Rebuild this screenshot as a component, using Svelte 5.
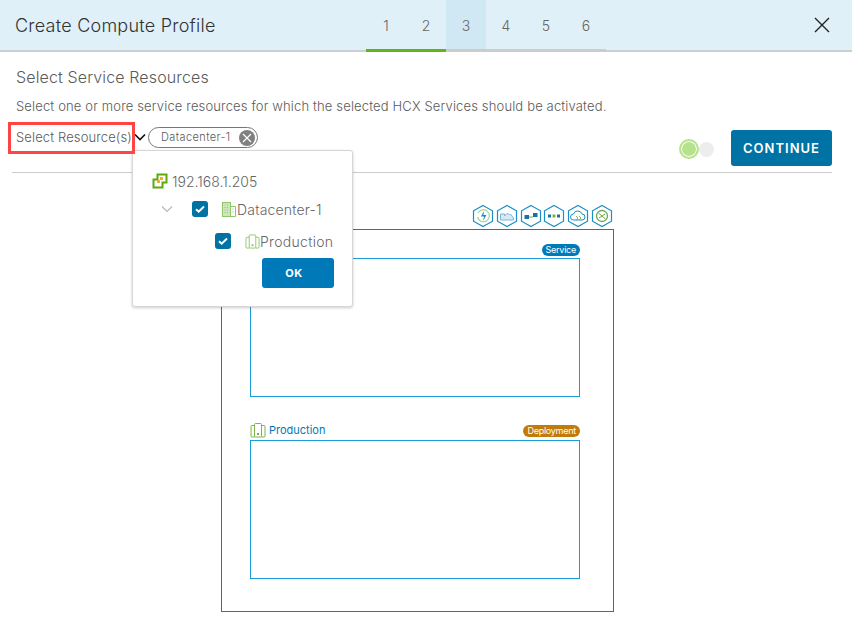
<script>
  const steps = [
    { n: 1, cls: 'done' },
    { n: 2, cls: 'done' },
    { n: 3, cls: 'active' },
    { n: 4, cls: '' },
    { n: 5, cls: '' },
    { n: 6, cls: '' }
  ];
</script>

<div class="page">
  <header class="head">
    <h1>Create Compute Profile</h1>
    <nav class="steps">
      {#each steps as s}
        <span class="step {s.cls}">{s.n}</span>
      {/each}
    </nav>
    <svg class="close" width="16" height="16" viewBox="0 0 16 16"><path d="M1 1l14 14M15 1L1 15" stroke="#222" stroke-width="1.4" fill="none"/></svg>
  </header>

  <main class="body">
    <h2>Select Service Resources</h2>
    <p class="desc">Select one or more service resources for which the selected HCX Services should be activated.</p>

    <div class="toolbar">
      <span class="sel">Select Resource(s)</span>
      <svg class="chev" width="12" height="8" viewBox="0 0 12 8"><path d="M1 1.500l5 5 5-5" stroke="#111" stroke-width="1.6" fill="none"/></svg>
      <span class="chip">Datacenter-1
        <span class="x"><svg width="16" height="16" viewBox="0 0 16 16"><path d="M4 4l8 8M12 4l-8 8" stroke="#fff" stroke-width="1.2"/></svg></span>
      </span>
      <span class="toggle"><i class="on"></i><i class="off"></i></span>
      <button class="cont">CONTINUE</button>
    </div>
    <div class="rule"></div>

    <div class="diagram">
      <div class="hexes">
        {#each [0,1,2,3,4,5] as h}
          <svg width="22" height="24" viewBox="0 0 22 24">
            <path d="M11 1.500l9.500 5.300v10.400L11 22.500 1.500 17.200V6.800z" fill="#fff" stroke="#1b8fc4" stroke-width="1.2"/>
            {#if h === 0}
              <path d="M6 9a6 6 0 1 1-.5 4" fill="none" stroke="#a5d59a" stroke-width="1.2"/>
              <path d="M12 7l-3 5.500h3l-1 4.500 3.500-6h-3z" fill="#1b8fc4"/>
            {:else if h === 1}
              <path d="M4.500 16v-6h4v2l3-3 2 2 1-1 3 4v2z" fill="#d6eaf5" stroke="#7fb6d6" stroke-width="1"/>
            {:else if h === 2}
              <rect x="4.500" y="11" width="4.500" height="4" fill="#1b6fa8"/>
              <rect x="13" y="9" width="4.500" height="4" fill="#1b6fa8"/>
              <path d="M9 13h4" stroke="#8cc152" stroke-width="1.2"/>
            {:else if h === 3}
              <rect x="5" y="10.500" width="3" height="3" fill="#1b6fa8"/>
              <rect x="9.500" y="10.500" width="3" height="3" fill="#7bb342"/>
              <rect x="14" y="10.500" width="3" height="3" fill="#1b6fa8"/>
            {:else if h === 4}
              <path d="M6.500 16a3 3 0 0 1 0-6 4.500 4.500 0 0 1 8.500 0 3 3 0 0 1 0 6z" fill="none" stroke="#1b8fc4" stroke-width="1"/>
              <path d="M9 12l2 2-2 2M12 12l2 2-2 2" fill="none" stroke="#7bb342" stroke-width="1"/>
            {:else}
              <circle cx="11" cy="12" r="5.500" fill="none" stroke="#6aa84f" stroke-width="1.300"/>
              <path d="M7.500 9l7 6M8 14c2-1 4-3 6-4" fill="none" stroke="#6aa84f" stroke-width="1"/>
            {/if}
          </svg>
        {/each}
      </div>
      <div class="frame">
        <div class="group">
          <div class="group-head"><span class="pill blue">Service</span></div>
          <div class="box first"></div>
        </div>
        <div class="group second">
          <div class="group-head">
            <span class="name">
              <svg width="16" height="16" viewBox="0 0 16 16" fill="none" stroke="#7fb24a" stroke-width="1"><rect x="4.500" y="1.500" width="7" height="13.500" rx="1"/><path d="M4.500 3.500H2a1 1 0 0 0-1 1V14a1 1 0 0 0 1 1h2.500M11.500 3.500H14a1 1 0 0 1 1 1V14a1 1 0 0 1-1 1h-2.500"/><rect x="7.500" y="11.500" width="1" height="1" fill="#7fb24a"/></svg>
              Production
            </span>
            <span class="pill amber">Deployment</span>
          </div>
          <div class="box"></div>
        </div>
      </div>
    </div>
  </main>

  <div class="pop">
    <div class="row r0">
      <svg width="16" height="16" viewBox="0 0 16 16">
        <path d="M5.500 1.500h9v8h-4v5h-9v-8h4z" fill="none" stroke="#5daa0e" stroke-width="2"/>
        <rect x="8" y="4" width="3" height="3" fill="#f2b01e"/>
        <rect x="5" y="7" width="3" height="3" fill="#f2b01e"/>
      </svg>
      <span>192.168.1.205</span>
    </div>
    <div class="row r1">
      <svg class="caret" width="12" height="8" viewBox="0 0 12 8"><path d="M1 1.500l5 5 5-5" stroke="#b8b8b8" stroke-width="1.200" fill="none"/></svg>
      <span class="cb"><svg width="16" height="16" viewBox="0 0 16 16"><path d="M4 8.200l2.700 2.500L12 5.500" stroke="#fff" stroke-width="2" fill="none"/></svg></span>
      <svg class="ic1" width="14" height="15" viewBox="0 0 14 15" fill="none" stroke="#8fc66b" stroke-width="1"><rect x="0.500" y="0.500" width="8" height="14" fill="#cfe6bd"/><path d="M8.500 4.500h5v10h-5M2.500 3h1M5 3h1M2.500 5.500h1M5 5.500h1M2.500 8h1M5 8h1M2.500 10.500h1M5 10.500h1M10.500 7h1M10.500 10h1"/></svg>
      <span>Datacenter-1</span>
    </div>
    <div class="row r2">
      <span class="cb"><svg width="16" height="16" viewBox="0 0 16 16"><path d="M4 8.200l2.700 2.500L12 5.500" stroke="#fff" stroke-width="2" fill="none"/></svg></span>
      <svg class="ic2" width="15" height="15" viewBox="0 0 16 16" fill="none" stroke="#8fc66b" stroke-width="1"><rect x="4.500" y="1" width="7" height="14" rx="1"/><path d="M4.500 3.500H2a1 1 0 0 0-1 1V14a1 1 0 0 0 1 1h2.500M11.500 3.500H14a1 1 0 0 1 1 1V14a1 1 0 0 1-1 1h-2.500"/><rect x="7.500" y="11.500" width="1" height="1" fill="#8fc66b"/></svg>
      <span>Production</span>
    </div>
    <div class="row r3"><button class="ok">OK</button></div>
  </div>

  <div class="mark"></div>
</div>

<style>
  :global(body) { margin: 0; background: #fff; }
  .page {
    position: relative;
    width: 852px;
    height: 643px;
    overflow: hidden;
    font-family: Inter, "Noto Sans", sans-serif;
    font-weight: 300;
    color: #5a5a5a;
  }
  .head {
    height: 50px;
    display: flex;
    align-items: center;
    background: #dff0f9;
    border-bottom: 2px solid #c9cfd2;
    box-sizing: content-box;
  }
  h1 {
    margin: 0 0 0 15px;
    width: 351px;
    font-size: 18px;
    font-weight: 300;
    letter-spacing: .24px;
    color: #333;
  }
  .steps { display: flex; height: 50px; }
  .step {
    width: 40px;
    height: 52px;
    margin-bottom: -2px;
    box-sizing: border-box;
    border-bottom: 3px solid #ccc;
    text-align: center;
    line-height: 51px;
    font-size: 14px;
    color: #666;
  }
  .step.done { border-bottom-color: #60b515; }
  .step.active { background: #d0e7f4; }
  .close { margin-left: auto; margin-right: 22px; }
  .body { padding: 0 20px 0 16px; }
  h2 {
    margin: 15px 0 0;
    font-size: 16px;
    font-weight: 300;
    line-height: 20px;
    letter-spacing: .13px;
    color: #5a5a5a;
  }
  .desc {
    margin: 10px 0 0;
    font-size: 13px;
    line-height: 18px;
    letter-spacing: .15px;
    color: #5a5a5a;
    white-space: nowrap;
  }
  .toolbar {
    position: relative;
    display: flex;
    align-items: flex-start;
    height: 49px;
    margin-top: 8px;
    font-size: 13px;
  }
  .sel { line-height: 20px; margin-top: 4px; width: 118px; white-space: nowrap; letter-spacing: .12px; }
  .chev { margin-top: 10px; }
  .chip {
    margin-left: 2px;
    margin-top: 4px;
    box-sizing: border-box;
    width: 110px;
    height: 21px;
    border: 1px solid #777;
    border-radius: 11px;
    font-size: 11px;
    line-height: 19px;
    letter-spacing: .4px;
    padding-left: 12px;
    display: flex;
    white-space: nowrap;
    position: relative;
  }
  .x {
    position: absolute;
    right: 2px;
    top: 1.500px;
    width: 16px;
    height: 16px;
    border-radius: 50%;
    background: #808080;
    display: block;
  }
  .x svg { display: block; }
  .toggle { display: flex; align-items: center; margin-left: auto; height: 20px; margin-right: 17px; margin-top: 16px; }
  .toggle i { display: block; border-radius: 50%; box-sizing: border-box; }
  .on { width: 20px; height: 20px; background: #b6e28c; border: 2px solid #b6e28c; box-shadow: inset 0 0 0 1px #fff; }
  .off { width: 15px; height: 15px; background: #ededed; }
  .cont {
    width: 101px;
    height: 36px;
    margin-top: 7px;
    border: 0;
    border-radius: 3px;
    background: #0072a3;
    color: #fff;
    font: 600 13px Inter, "Noto Sans", sans-serif;
    letter-spacing: 1px;
  }
  .rule { height: 1px; background: #ccc; margin: 0 0 0 -4px; }
  .diagram { margin-left: 205px; width: 393px; margin-top: 31px; }
  .hexes { display: flex; justify-content: flex-end; gap: 1.800px; height: 25px; margin-right: 1px; }
  .frame {
    box-sizing: border-box;
    width: 393px;
    height: 383px;
    border: 1px solid #3d6f8e;
    padding: 14px 33px 0 28px;
  }
  .group-head {
    height: 14px;
    display: flex;
    justify-content: flex-end;
    align-items: flex-start;
  }
  .group.second { margin-top: 27px; }
  .group.second .group-head { justify-content: space-between; height: 16px; }
  .box { height: 139px; border: 1px solid #1b9bd8; box-sizing: border-box; }
  .pill {
    font-size: 9px;
    font-weight: 400;
    letter-spacing: -.25px;
    line-height: 12px;
    height: 12px;
    padding: 0 4px;
    border-radius: 6px;
    color: #fff;
    white-space: nowrap;
  }
  .blue { background: #0079b8; }
  .amber { background: #c27b0a; }
  .second .pill { margin-top: 1px; }
  .name { display: flex; align-items: center; gap: 3px; font-size: 11px; font-weight: 400; color: #0079b8; margin-top: -2px; }
  .pop {
    position: absolute;
    left: 132px;
    top: 150px;
    width: 221px;
    height: 157px;
    box-sizing: border-box;
    background: #fff;
    border: 1px solid #d7d7d7;
    border-radius: 3px;
    box-shadow: 0 1px 3px rgba(0,0,0,.2);
    font-size: 14px;
    color: #666;
  }
  .row { display: flex; align-items: center; }
  .r0 { margin: 21px 0 0 19px; gap: 4px; height: 18px; }
  .r1 { margin: 10px 0 0 28px; height: 18px; letter-spacing: .2px; }
  .r2 { margin: 14px 0 0 82px; height: 18px; letter-spacing: .3px; }
  .r3 { margin: 8px 0 0 129px; }
  .caret { margin-right: 19px; }
  .cb { width: 16px; height: 16px; border-radius: 3px; background: #0072a3; display: block; }
  .cb svg { display: block; }
  .ic1 { margin-left: 14px; margin-right: 1px; }
  .ic2 { margin-left: 14px; }
  .ok {
    width: 72px;
    height: 30px;
    border: 0;
    border-radius: 3px;
    background: #0079b8;
    color: #fff;
    font: 700 11px Inter, "Noto Sans", sans-serif;
    letter-spacing: .5px;
    padding-right: 14px;
  }
  .mark {
    position: absolute;
    left: 8px;
    top: 122px;
    width: 127px;
    height: 32px;
    box-sizing: border-box;
    border: 3px solid #f44;
  }
</style>
